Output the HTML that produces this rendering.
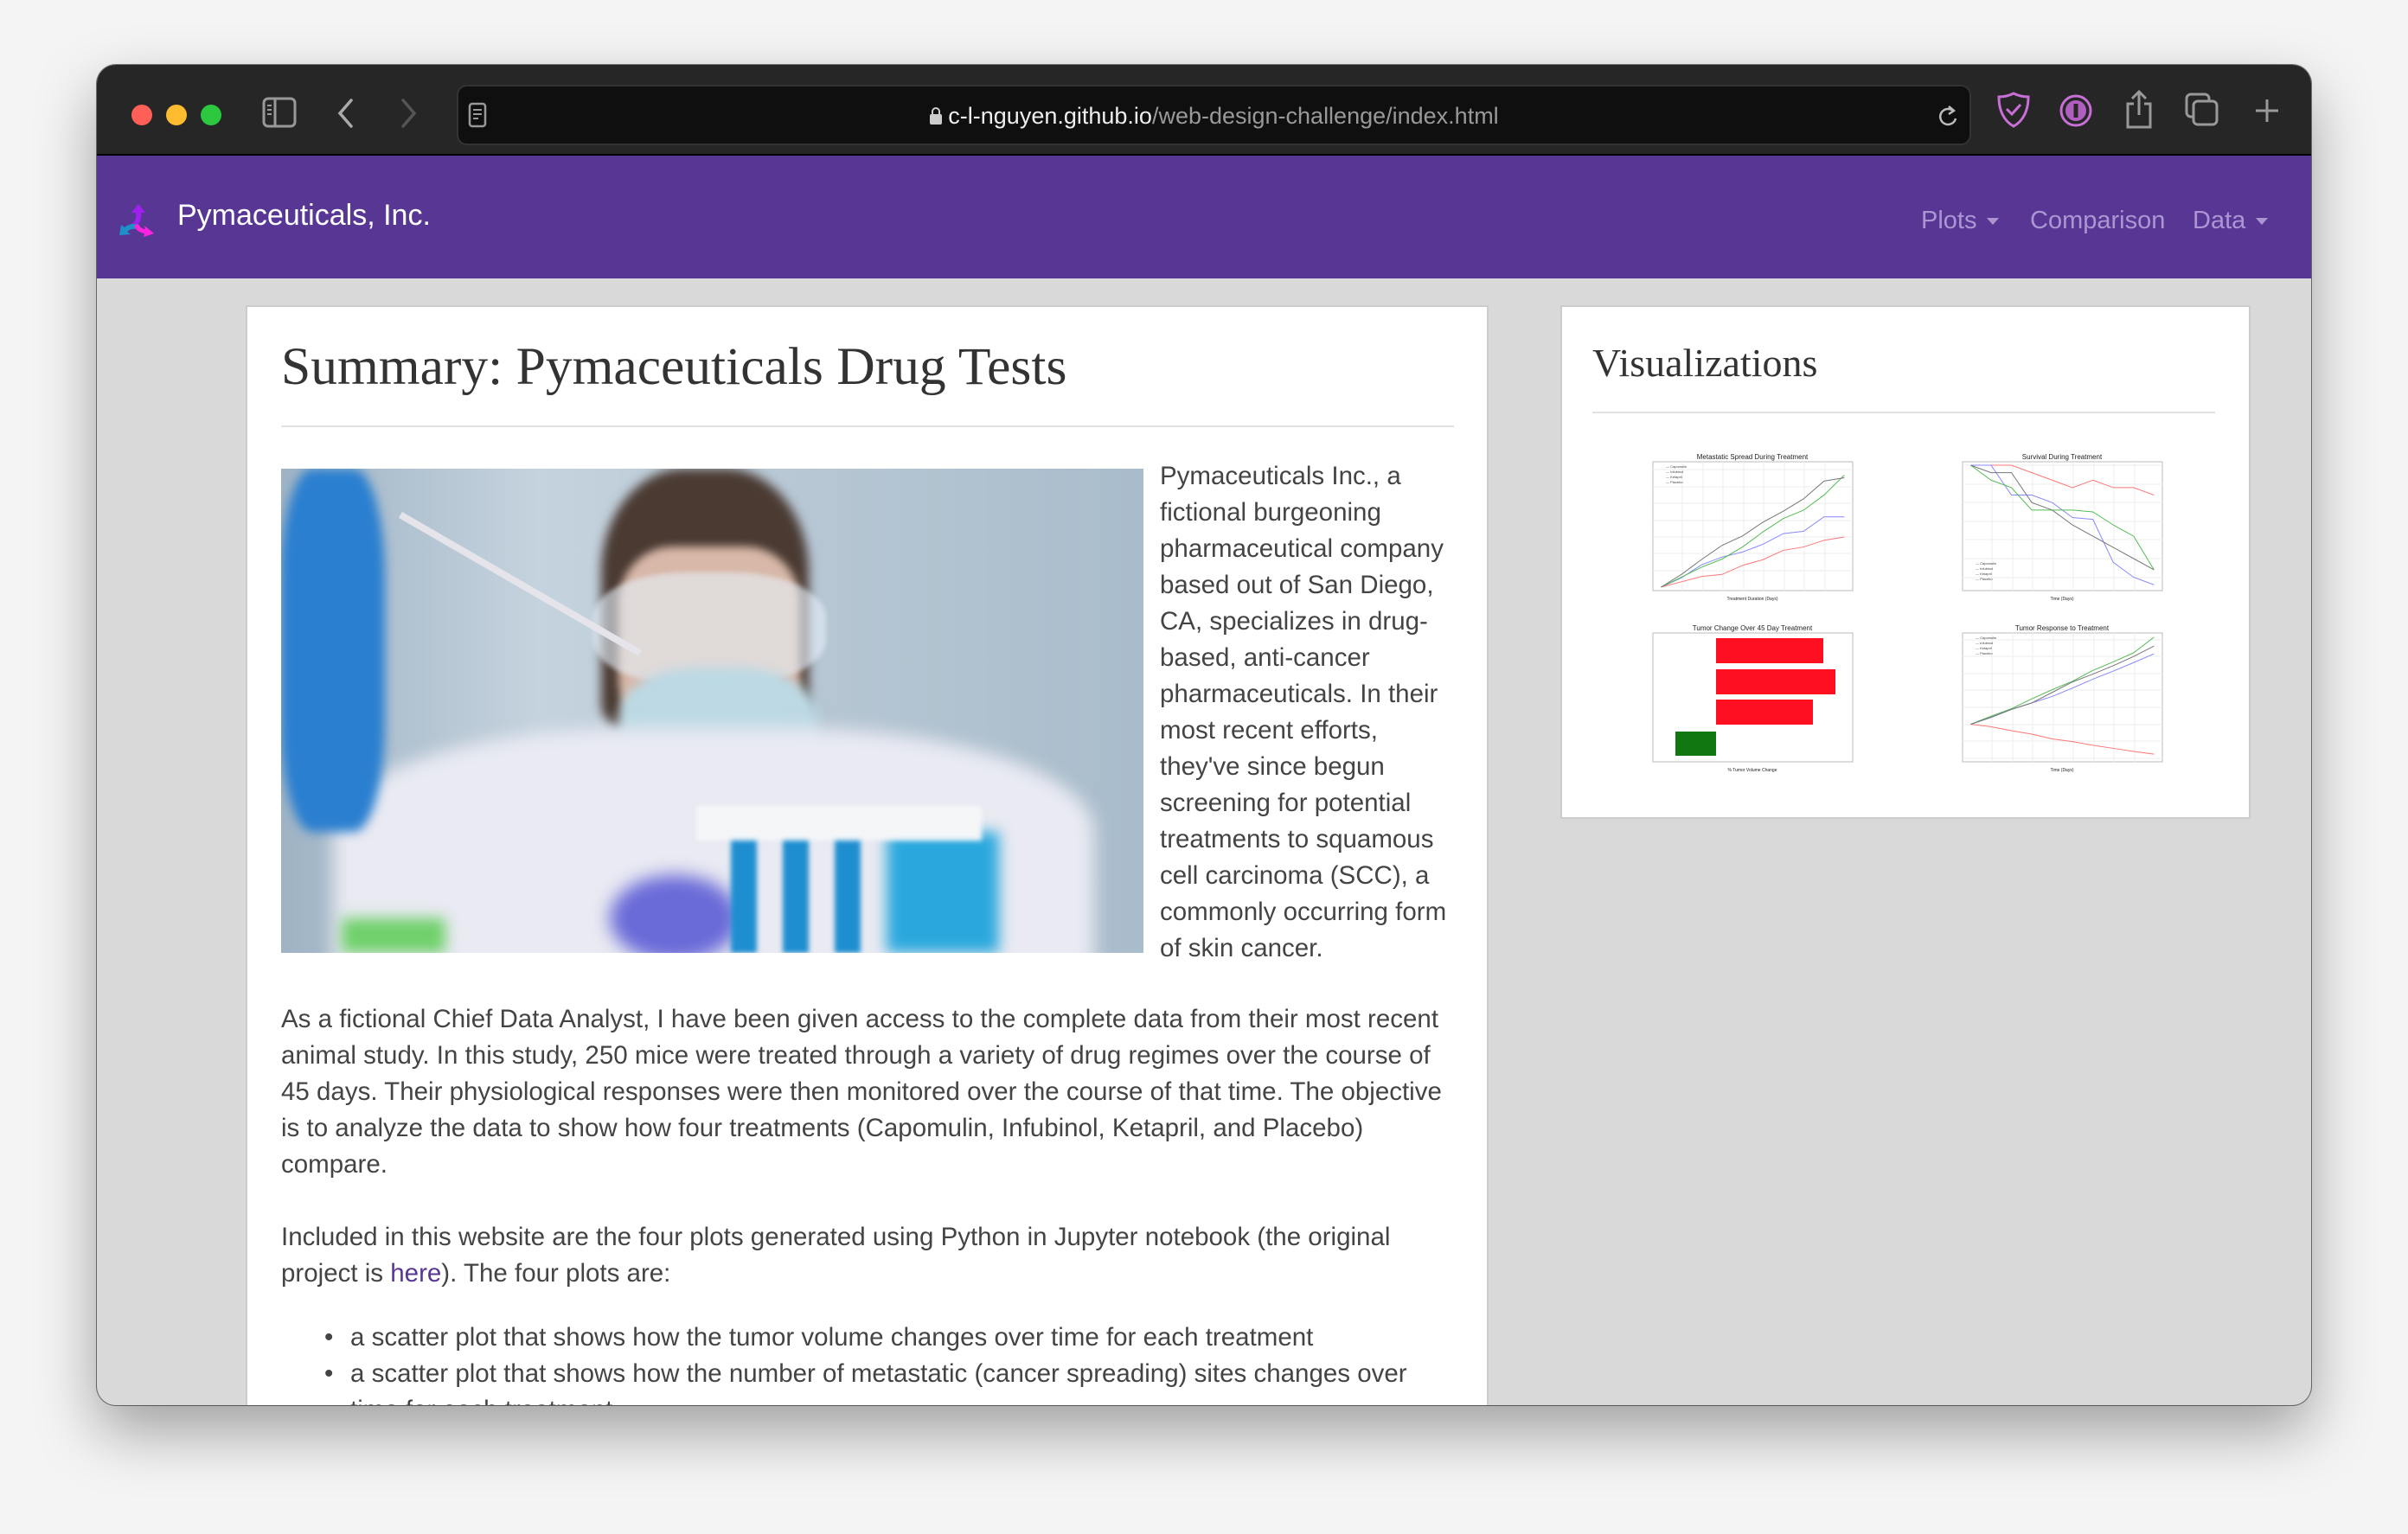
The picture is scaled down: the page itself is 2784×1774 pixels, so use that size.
<!DOCTYPE html>
<html><head><meta charset="utf-8">
<style>
*{margin:0;padding:0;box-sizing:border-box}
body{width:2784px;height:1774px;background:#f4f4f4;position:relative;overflow:hidden;font-family:"Liberation Sans",sans-serif}
.win{position:absolute;left:112px;top:75px;width:2560px;height:1550px;border-radius:22px;overflow:hidden;background:#d9d9d9;box-shadow:0 30px 70px rgba(0,0,0,.35),0 0 0 1px rgba(0,0,0,.5)}
.tb{position:absolute;left:0;top:0;width:100%;height:105px;background:#262626;border-bottom:2px solid #000}
.dot{position:absolute;top:46px;width:24px;height:24px;border-radius:50%}
.addr{position:absolute;left:416px;top:23px;width:1751px;height:70px;background:#0f0f0f;border:2px solid #333;border-radius:12px}
.url{position:absolute;left:0;width:100%;top:19px;text-align:center;color:#eee;font-size:27px}
.url span{color:#999}
.nav{position:absolute;left:0;top:105px;width:100%;height:142px;background:#583794}
.brand{position:absolute;left:93px;top:50px;color:#fff;font-size:34px}
.ni{position:absolute;top:59px;color:#ab96d3;font-size:29px}
.caret{display:inline-block;border-left:7px solid transparent;border-right:7px solid transparent;border-top:8px solid #ab96d3;vertical-align:middle;margin-left:12px}
.card{position:absolute;background:#fff;border:2px solid #ccc}
h1{position:absolute;font-family:"Liberation Serif",serif;font-weight:normal;color:#333;white-space:nowrap}
.hr{position:absolute;height:2px;background:#e2e2e2}
.t{position:absolute;color:#444;font-size:29.5px;white-space:nowrap;line-height:42px}
</style></head><body>
<div class="win">
 <div class="tb">
  <div class="dot" style="left:40px;background:#fe5f57"></div>
  <div class="dot" style="left:80px;background:#febc2e"></div>
  <div class="dot" style="left:120px;background:#2bc840"></div>
  <svg style="position:absolute;left:190px;top:36px" width="44" height="40" viewBox="0 0 44 40"><rect x="3" y="3" width="36" height="32" rx="5" fill="none" stroke="#999" stroke-width="3"/><line x1="16" y1="3" x2="16" y2="35" stroke="#999" stroke-width="3"/><path d="M7 11h5M7 16h5M7 21h5" stroke="#999" stroke-width="2"/></svg>
  <svg style="position:absolute;left:276px;top:38px" width="24" height="36"><path d="M18 3L5 18l13 15" fill="none" stroke="#aaa" stroke-width="3.5" stroke-linecap="round"/></svg>
  <svg style="position:absolute;left:348px;top:38px" width="24" height="36"><path d="M6 3l13 15L6 33" fill="none" stroke="#555" stroke-width="3.5" stroke-linecap="round"/></svg>
  <div class="addr">
   <svg style="position:absolute;left:11px;top:18px" width="22" height="30"><rect x="2" y="2" width="18" height="26" rx="3" fill="none" stroke="#999" stroke-width="2.5"/><path d="M6 9h10M6 14h10M6 19h6" stroke="#999" stroke-width="2"/></svg>
   <div class="url"><svg width="16" height="22" style="vertical-align:-2px;margin-right:6px"><rect x="1" y="9" width="14" height="12" rx="2" fill="#ccc"/><path d="M4 9V6a4 4 0 0 1 8 0v3" fill="none" stroke="#ccc" stroke-width="2"/></svg>c-l-nguyen.github.io<span>/web-design-challenge/index.html</span></div>
   <svg style="position:absolute;right:12px;top:20px" width="26" height="28"><path d="M20 9a9 9 0 1 0 2 8" fill="none" stroke="#bbb" stroke-width="2.5"/><path d="M14 3l6 5-6 4" fill="none" stroke="#bbb" stroke-width="2.5"/></svg>
  </div>
  <svg style="position:absolute;left:2196px;top:30px" width="40" height="44"><path d="M20 3C14 6 8 7 3 7c0 16 6 28 17 34C31 35 37 23 37 7c-5 0-11-1-17-4z" fill="none" stroke="#c86fd6" stroke-width="3"/><path d="M12 21l6 6 10-11" fill="none" stroke="#c86fd6" stroke-width="3"/></svg>
  <svg style="position:absolute;left:2268px;top:33px" width="40" height="40"><circle cx="20" cy="20" r="17" fill="none" stroke="#c86fd6" stroke-width="3"/><circle cx="20" cy="20" r="12" fill="#b05fc0"/><rect x="17.5" y="12" width="5" height="16" fill="#262626"/></svg>
  <svg style="position:absolute;left:2344px;top:28px" width="34" height="48"><path d="M11 17H4v27h26V17h-7" fill="none" stroke="#999" stroke-width="3"/><path d="M17 30V3M9 11l8-8 8 8" fill="none" stroke="#999" stroke-width="3"/></svg>
  <svg style="position:absolute;left:2414px;top:32px" width="40" height="40"><rect x="2" y="2" width="26" height="26" rx="5" fill="none" stroke="#999" stroke-width="3"/><rect x="10" y="10" width="27" height="27" rx="5" fill="#262626" stroke="#999" stroke-width="3"/></svg>
  <svg style="position:absolute;left:2494px;top:38px" width="30" height="30"><path d="M15 2v26M2 15h26" stroke="#999" stroke-width="3"/></svg>
 </div>
 <div class="nav">
  <svg style="position:absolute;left:22px;top:52px" width="46" height="46" viewBox="0 0 46 46"><path d="M26 4l8 10h-5c1 8-2 14-8 17l-3-4c4-2 6-7 5-13h-5z" fill="#a020f0"/><path d="M4 40l2-12 4 3c5-4 10-5 16-3l-1 5c-5-1-9 0-12 3l4 3z" fill="#1e90c8"/><path d="M44 38l-12 4 1-4c-6-1-10-4-12-9l5-2c2 4 4 6 8 6l-1-4z" fill="#ff22e0"/></svg>
  <div class="brand">Pymaceuticals, Inc.</div>
  <div class="ni" style="left:2109px">Plots<span class="caret"></span></div>
  <div class="ni" style="left:2235px">Comparison</div>
  <div class="ni" style="left:2423px">Data<span class="caret"></span></div>
 </div>

 <div class="card" style="left:172px;top:278px;width:1437px;height:1400px;overflow:hidden">
  <h1 style="left:39px;top:34px;font-size:61.5px">Summary: Pymaceuticals Drug Tests</h1>
  <div class="hr" style="left:39px;top:137px;width:1356px"></div>
  <div style="position:absolute;left:39px;top:187px;width:997px;height:560px;overflow:hidden;background:linear-gradient(90deg,#9fb3c4 0%,#c5d3de 30%,#b7c7d4 60%,#a9bccb 100%)">
   <div style="position:absolute;left:370px;top:0;width:240px;height:300px;background:#4a3a32;border-radius:40% 40% 10% 10%;filter:blur(6px)"></div>
   <div style="position:absolute;left:390px;top:90px;width:210px;height:220px;background:#d8b8a8;border-radius:30%;filter:blur(5px)"></div>
   <div style="position:absolute;left:360px;top:120px;width:270px;height:130px;background:rgba(230,240,250,.6);border-radius:40%;filter:blur(3px)"></div>
   <div style="position:absolute;left:390px;top:230px;width:230px;height:140px;background:#bcd9e4;border-radius:40%;filter:blur(6px)"></div>
   <div style="position:absolute;left:60px;top:300px;width:880px;height:300px;background:#e9eaf2;border-radius:40% 40% 0 0;filter:blur(10px)"></div>
   <div style="position:absolute;left:0;top:0;width:120px;height:420px;background:#2a7fd0;border-radius:30%;filter:blur(6px)"></div>
   <div style="position:absolute;left:700px;top:420px;width:130px;height:140px;background:#2aa8dd;filter:blur(8px)"></div>
   <div style="position:absolute;left:380px;top:470px;width:150px;height:100px;background:#6a6ad8;border-radius:50%;filter:blur(10px)"></div>
   <div style="position:absolute;left:520px;top:420px;width:30px;height:140px;background:#1e8ed0;filter:blur(3px)"></div>
   <div style="position:absolute;left:580px;top:420px;width:30px;height:140px;background:#1e8ed0;filter:blur(3px)"></div>
   <div style="position:absolute;left:640px;top:420px;width:30px;height:140px;background:#1e8ed0;filter:blur(3px)"></div>
   <div style="position:absolute;left:480px;top:390px;width:330px;height:40px;background:#f4f6f8;filter:blur(3px)"></div>
   <div style="position:absolute;left:70px;top:520px;width:120px;height:40px;background:#6fd06a;filter:blur(8px)"></div>
   <div style="position:absolute;left:140px;top:50px;width:320px;height:8px;background:#e4e4ea;transform:rotate(30deg);transform-origin:0 0"></div>
  </div>
  <div class="t" style="left:1055px;top:175px">Pymaceuticals Inc., a<br>fictional burgeoning<br>pharmaceutical company<br>based out of San Diego,<br>CA, specializes in drug-<br>based, anti-cancer<br>pharmaceuticals. In their<br>most recent efforts,<br>they've since begun<br>screening for potential<br>treatments to squamous<br>cell carcinoma (SCC), a<br>commonly occurring form<br>of skin cancer.</div>
  <div class="t" style="left:39px;top:803px">As a fictional Chief Data Analyst, I have been given access to the complete data from their most recent<br>animal study. In this study, 250 mice were treated through a variety of drug regimes over the course of<br>45 days. Their physiological responses were then monitored over the course of that time. The objective<br>is to analyze the data to show how four treatments (Capomulin, Infubinol, Ketapril, and Placebo)<br>compare.</div>
  <div class="t" style="left:39px;top:1055px">Included in this website are the four plots generated using Python in Jupyter notebook (the original<br>project is <span style="color:#583794">here</span>). The four plots are:</div>
  <div class="t" style="left:39px;top:1171px"><span style="position:absolute;left:50px;top:0">•</span><span style="position:absolute;left:50px;top:42px">•</span><div style="margin-left:80px">a scatter plot that shows how the tumor volume changes over time for each treatment<br>a scatter plot that shows how the number of metastatic (cancer spreading) sites changes over<br>time for each treatment</div></div>
 </div>

 <div class="card" style="left:1692px;top:278px;width:798px;height:594px">
  <h1 style="left:35px;top:38px;font-size:46px">Visualizations</h1>
  <div class="hr" style="left:35px;top:121px;width:720px"></div>
 </div>
 <svg style="position:absolute;left:0;top:0" width="2560" height="1550" viewBox="112 75 2560 1550" font-family="Liberation Sans,sans-serif">
  <g fill="#222" font-size="8" text-anchor="middle">
   <text x="2026" y="531">Metastatic Spread During Treatment</text>
   <text x="2384" y="531">Survival During Treatment</text>
   <text x="2026" y="729">Tumor Change Over 45 Day Treatment</text>
   <text x="2384" y="729">Tumor Response to Treatment</text>
   <text x="2026" y="694" font-size="5">Treatment Duration (Days)</text>
   <text x="2384" y="694" font-size="5">Time (Days)</text>
   <text x="2026" y="892" font-size="5">% Tumor Volume Change</text>
   <text x="2384" y="892" font-size="5">Time (Days)</text>
  </g>
  <g fill="#fff" stroke="#bbb" stroke-width="1">
   <rect x="1911" y="534" width="231" height="149"/><rect x="2269" y="534" width="231" height="149"/>
   <rect x="1911" y="732" width="231" height="149"/><rect x="2269" y="732" width="231" height="149"/>
  </g>
  <g stroke="#eee" stroke-width="1">
   <path d="M1945 534v149M1969 534v149M1992 534v149M2016 534v149M2039 534v149M2063 534v149M2086 534v149M2110 534v149"/>
   <path d="M2303 534v149M2327 534v149M2350 534v149M2374 534v149M2397 534v149M2421 534v149M2444 534v149M2468 534v149"/>
   <path d="M2303 732v149M2327 732v149M2350 732v149M2374 732v149M2397 732v149M2421 732v149M2444 732v149M2468 732v149"/>
   <path d="M1911 660h231M1911 640h231M1911 621h231M1911 602h231M1911 582h231M1911 563h231M1911 543h231"/>
   <path d="M2269 668h231M2269 646h231M2269 624h231M2269 603h231M2269 581h231M2269 560h231M2269 538h231"/>
   <path d="M2269 877h231M2269 857h231M2269 838h231M2269 818h231M2269 798h231M2269 779h231M2269 759h231M2269 740h231"/>
  </g>
  <g fill="none">
   <g transform="translate(1920.4,679) scale(4.71,-38.7)">
    <polyline vector-effect="non-scaling-stroke" stroke="#f77" points="0,0 5,.16 10,.32 15,.38 20,.65 25,.82 30,1.1 35,1.2 40,1.4 45,1.5"/>
    <polyline vector-effect="non-scaling-stroke" stroke="#88f" points="0,0 5,.28 10,.67 15,.9 20,1.05 25,1.28 30,1.6 35,1.67 40,2.1 45,2.1"/>
    <polyline vector-effect="non-scaling-stroke" stroke="#5b5" points="0,0 5,.3 10,.6 15,.84 20,1.2 25,1.65 30,2.05 35,2.3 40,2.75 45,3.35"/>
    <polyline vector-effect="non-scaling-stroke" stroke="#777" points="0,0 5,.38 10,.83 15,1.25 20,1.53 25,1.94 30,2.27 35,2.64 40,3.17 45,3.27"/>
   </g>
   <g transform="translate(2278.4,754) scale(4.71,-2.16)">
    <polyline vector-effect="non-scaling-stroke" stroke="#f77" points="0,100 5,100 10,100 15,96 20,92 25,88 30,92 35,88 40,88 45,84"/>
    <polyline vector-effect="non-scaling-stroke" stroke="#88f" points="0,100 5,100 10,84 15,84 20,80 25,72 30,71 35,48 40,40 45,36"/>
    <polyline vector-effect="non-scaling-stroke" stroke="#5b5" points="0,100 5,92 10,88 15,76 20,76 25,76 30,75 35,68 40,62 45,44"/>
    <polyline vector-effect="non-scaling-stroke" stroke="#777" points="0,100 5,96 10,96 15,80 20,76 25,68 30,62 35,56 40,50 45,44"/>
   </g>
   <g transform="translate(2278.4,1014) scale(4.71,-3.92)">
    <polyline vector-effect="non-scaling-stroke" stroke="#f77" points="0,45 5,44.3 10,43.1 15,42.1 20,40.7 25,39.9 30,38.8 35,37.9 40,37 45,36.2"/>
    <polyline vector-effect="non-scaling-stroke" stroke="#88f" points="0,45 5,47 10,49.4 15,51.3 20,53.2 25,55.7 30,58.3 35,60.7 40,63.2 45,65.8"/>
    <polyline vector-effect="non-scaling-stroke" stroke="#5b5" points="0,45 5,47.4 10,49.6 15,52.5 20,55.2 25,57.7 30,60.9 35,63.4 40,66.1 45,70.7"/>
    <polyline vector-effect="non-scaling-stroke" stroke="#777" points="0,45 5,47.1 10,49.4 15,51.3 20,54.4 25,57.5 30,59.8 35,62.3 40,65 45,68.1"/>
   </g>
  </g>
  <g>
   <rect x="1984" y="738" width="124" height="29" fill="#ff1020"/>
   <rect x="1984" y="774" width="138" height="29" fill="#ff1020"/>
   <rect x="1984" y="809" width="112" height="29" fill="#ff1020"/>
   <rect x="1937" y="846" width="47" height="28" fill="#117711"/>
  </g>
  <g fill="#444" font-size="4">
   <text x="1926" y="541">— Capomulin</text><text x="1926" y="547">— Infubinol</text><text x="1926" y="553">— Ketapril</text><text x="1926" y="559">— Placebo</text>
   <text x="2284" y="653">— Capomulin</text><text x="2284" y="659">— Infubinol</text><text x="2284" y="665">— Ketapril</text><text x="2284" y="671">— Placebo</text>
   <text x="2284" y="739">— Capomulin</text><text x="2284" y="745">— Infubinol</text><text x="2284" y="751">— Ketapril</text><text x="2284" y="757">— Placebo</text>
  </g>
 </svg>
</div>
</body></html>
